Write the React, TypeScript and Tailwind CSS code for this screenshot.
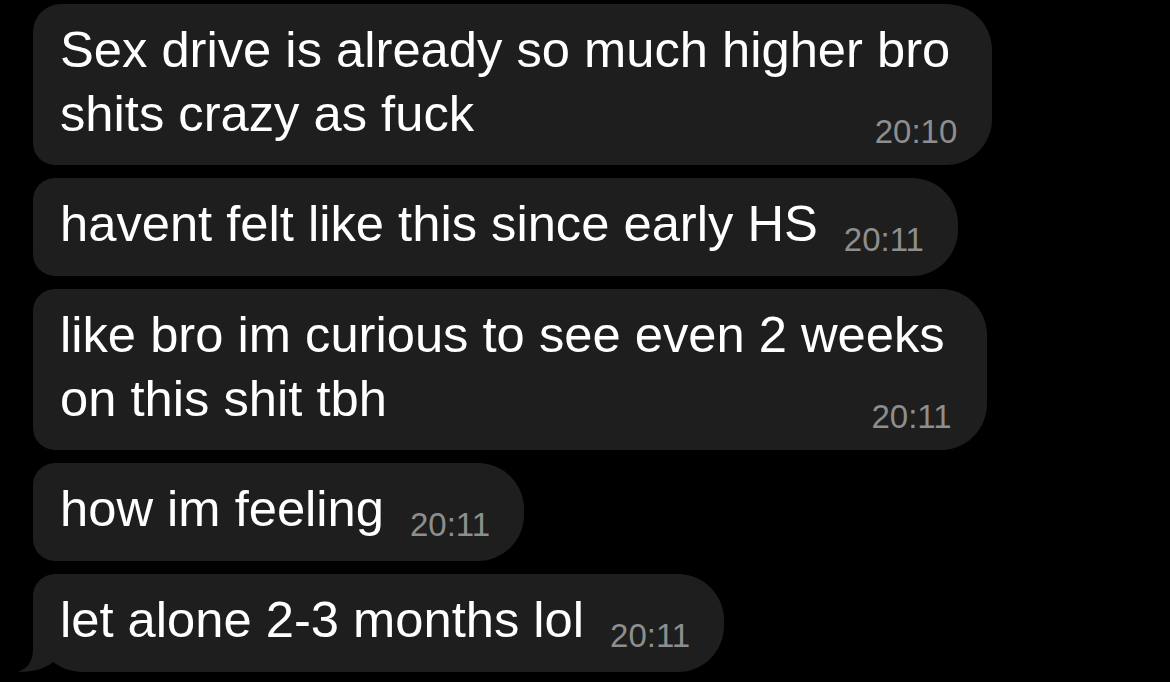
import React from 'react';

interface Message {
  lines: string[];
  time: string;
  first?: boolean;
  tail?: boolean;
}

const MESSAGES: Message[] = [
  { lines: ['Sex drive is already so much higher bro', 'shits crazy as fuck'], time: '20:10', first: true },
  { lines: ['havent felt like this since early HS'], time: '20:11' },
  { lines: ['like bro im curious to see even 2 weeks', 'on this shit tbh'], time: '20:11' },
  { lines: ['how im feeling'], time: '20:11' },
  { lines: ['let alone 2-3 months lol'], time: '20:11', tail: true },
];

const font = { fontFamily: '"Liberation Sans", Arial, sans-serif' };

// little hook on the last bubble of the group
const Tail: React.FC = () => (
  <svg
    className="absolute left-[-15px] bottom-0 w-[35px] h-[53px] text-[#1e1e1e]"
    viewBox="0 0 35 53"
    aria-hidden="true"
  >
    <path d="M15 0 L35 0 L35 43 C27 50 14 53 0 53 C10 49 15 42 15 30 Z" fill="currentColor" />
  </svg>
);

const Bubble: React.FC<{ msg: Message }> = ({ msg }) => {
  const multi = msg.lines.length > 1;
  const corners = msg.first
    ? 'rounded-tl-[28px] rounded-bl-[22px]'
    : msg.tail
      ? 'rounded-tl-[22px] rounded-bl-[50px]'
      : 'rounded-tl-[22px] rounded-bl-[22px]';

  if (multi) {
    return (
      <div
        className={`relative self-start flex flex-col bg-[#1e1e1e] rounded-r-[46px] ${corners} pl-[27px] pr-[42px] pt-[14px] pb-[17px]`}
      >
        <p className="text-white text-[50.7px] leading-[64px] whitespace-nowrap">
          {msg.lines.map((l, i) => (
            <React.Fragment key={i}>
              {l}
              {i < msg.lines.length - 1 && <br />}
            </React.Fragment>
          ))}
        </p>
        <span className="self-end -mt-[31px] -mr-[7px] text-[#8e8e8e] text-[33px] leading-[33px]">
          {msg.time}
        </span>
        {msg.tail && <Tail />}
      </div>
    );
  }

  return (
    <div
      className={`relative self-start flex items-end gap-[26px] bg-[#1e1e1e] rounded-r-[46px] ${corners} pl-[27px] pr-[34px] pt-[14px] pb-[20px]`}
    >
      <p className="text-white text-[50.7px] leading-[64px] whitespace-nowrap">{msg.lines[0]}</p>
      <span className="text-[#8e8e8e] text-[33px] leading-[33px]">{msg.time}</span>
      {msg.tail && <Tail />}
    </div>
  );
};

export default function App() {
  return (
    <div className="w-[1170px] h-[682px] bg-black overflow-hidden" style={font}>
      <div className="flex flex-col gap-[13px] pt-[4px] pl-[33px]">
        {MESSAGES.map((m, i) => (
          <Bubble key={i} msg={m} />
        ))}
      </div>
    </div>
  );
}
